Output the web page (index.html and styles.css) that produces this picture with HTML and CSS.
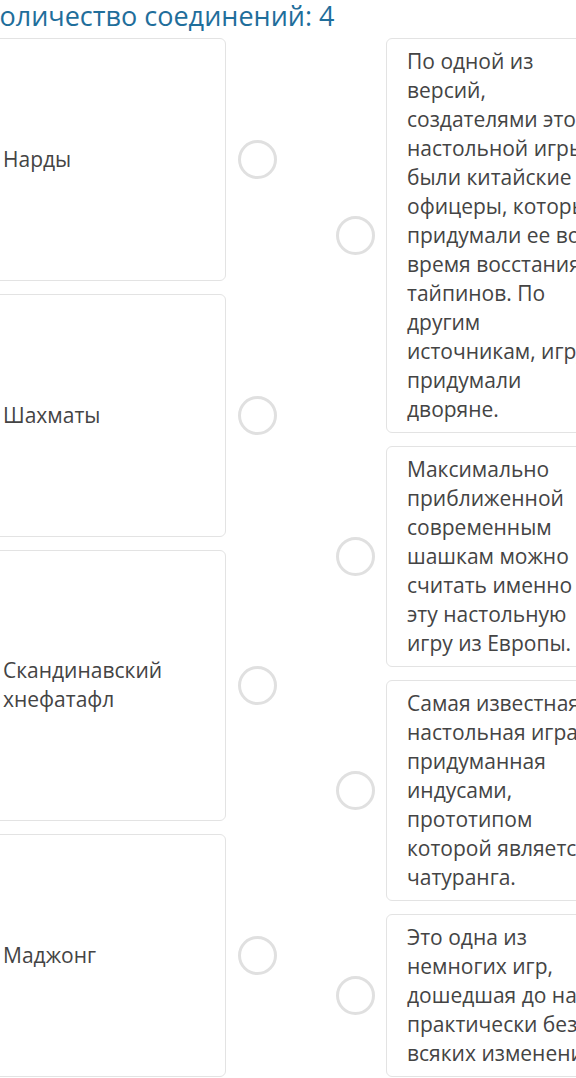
FILE: index.html
```html
<!DOCTYPE html>
<html lang="ru">
<head>
<meta charset="utf-8">
<link rel="stylesheet" href="styles.css">
</head>
<body>
<div class="page">
  <h2 class="title">Количество соединений: 4</h2>
  <div class="board">
    <div class="col col-left">
      <div class="item"><div class="card"><span>Нарды</span></div><div class="dot"></div></div>
      <div class="item"><div class="card"><span>Шахматы</span></div><div class="dot"></div></div>
      <div class="item"><div class="card"><span>Скандинавский хнефатафл</span></div><div class="dot"></div></div>
      <div class="item"><div class="card"><span>Маджонг</span></div><div class="dot"></div></div>
    </div>
    <div class="col col-right">
      <div class="item"><div class="dot"></div><div class="card"><span>По одной из версий, создателями этой настольной игры были китайские офицеры, которые придумали ее во время восстания тайпинов. По другим источникам, игру придумали дворяне.</span></div></div>
      <div class="item"><div class="dot"></div><div class="card"><span>Максимально приближенной современным шашкам можно считать именно эту настольную игру из Европы.</span></div></div>
      <div class="item"><div class="dot"></div><div class="card"><span>Самая известная настольная игра, придуманная индусами, прототипом которой является чатуранга.</span></div></div>
      <div class="item"><div class="dot"></div><div class="card"><span>Это одна из немногих игр, дошедшая до нас практически без всяких изменений.</span></div></div>
    </div>
  </div>
</div>
</body>
</html>
```

FILE: styles.css
```css
html, body {
  margin: 0;
  padding: 0;
  background: #fff;
  overflow: hidden;
}
body {
  font-family: "Open Sans", "Noto Sans", sans-serif;
  width: 576px;
  height: 1078px;
}
.page {
  margin-left: -17px;
  width: 700px;
}
.title {
  margin: 0 0 6px 0;
  font-size: 27px;
  line-height: 32px;
  font-weight: 400;
  color: #1f6e9b;
  white-space: nowrap;
}
.board {
  display: flex;
  align-items: stretch;
  gap: 59px;
}
.col {
  display: flex;
  flex-direction: column;
  gap: 13px;
}
.col-left .item {
  flex: 1 1 auto;
}
.item {
  display: flex;
  align-items: center;
  gap: 12px;
}
.col-right .item {
  gap: 11px;
}
.card {
  box-sizing: border-box;
  align-self: stretch;
  display: flex;
  align-items: center;
  border: 1px solid #e3e3e3;
  border-radius: 6px;
  background: #fff;
  padding: 8px 19px;
  font-size: 21px;
  line-height: 29px;
  color: #444;
}
.col-left .card {
  width: 243px;
}
.col-right .card {
  width: 240px;
  padding: 8px 20px;
}
.dot {
  flex: none;
  width: 39px;
  height: 39px;
  box-sizing: border-box;
  border: 3px solid #e0e0e0;
  border-radius: 50%;
}
```
